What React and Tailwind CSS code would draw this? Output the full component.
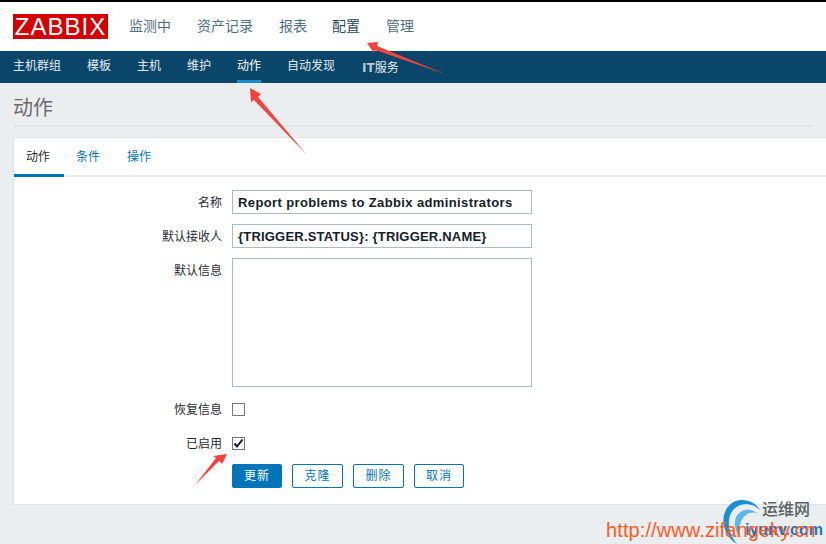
const cjk = "font-['Liberation_Sans','Noto_Sans_CJK_SC',sans-serif]";

const mainMenu = [
  { label: "监测中", w: "w-[68px]" },
  { label: "资产记录", w: "w-[82px]" },
  { label: "报表", w: "w-[53px]" },
  { label: "配置", w: "w-[54px]", active: true },
  { label: "管理", w: "w-[54px]" },
];

const subMenu = [
  { label: "主机群组", w: "w-[74px]" },
  { label: "模板", w: "w-[50px]" },
  { label: "主机", w: "w-[50px]" },
  { label: "维护", w: "w-[50px]" },
  { label: "动作", w: "w-[50px]", active: true },
  { label: "自动发现", w: "w-[74px]" },
];

function Arrow({ points }) {
  return <polygon points={points} fill="#f5423c" />;
}

function Row({ label, children, className = "" }) {
  return (
    <div className={"flex " + className}>
      <div className="h-[24px] w-[218px] pr-[10px] pt-[1px] text-right text-[12px] leading-[24px] text-[#1f2c33]">{label}</div>
      {children}
    </div>
  );
}

function TextInput({ value, tracking }) {
  return (
    <div className={tracking + " w-[300px] h-[24px] border border-[#acbbc4] bg-white pl-[5px] font-['Liberation_Sans',sans-serif] text-[13px] font-bold leading-[23px] text-[#14202a]"}>
      {value}
    </div>
  );
}

function OutlineButton({ label, w }) {
  return (
    <button className={w + " h-[24px] rounded-[2px] border border-[#0275b8] bg-white text-[12px] tracking-[1px] text-[#0275b8]"}>
      {label}
    </button>
  );
}

export default function App() {
  return (
    <div className={"relative w-[826px] h-[544px] overflow-hidden bg-[#ebeef0] " + cjk}>
      <div className="h-[2px] bg-black" />

      <header className="flex h-[49px] items-start bg-white pl-[13px]">
        <div className="mt-[12px] flex h-[25px] w-[95px] items-center justify-center bg-[#d40000] font-['Liberation_Sans',sans-serif] text-[24px] leading-none tracking-[1px] text-white">
          ZABBIX
        </div>
        <nav className="ml-[21px] mt-[12px] flex text-[14px] leading-[24px] text-[#4f6f80]">
          {mainMenu.map((m) => (
            <span key={m.label} className={m.w + (m.active ? " text-[#2b4a5b]" : "")}>{m.label}</span>
          ))}
        </nav>
      </header>

      <nav className="flex h-[32px] items-start bg-[#0a466a] pl-[13px] text-[12px] leading-[30px] text-[#e3edf3]">
        {subMenu.map((m) => (
          <span key={m.label} className={m.w + (m.active ? " text-white" : "")}>
            <span className={"inline-block h-[32px]" + (m.active ? " border-b-[3px] border-[#168ccc]" : "")}>{m.label}</span>
          </span>
        ))}
        <span className="mt-[2px] ml-[1px]"><b className="font-['DejaVu_Sans',sans-serif] text-[#b9c9d2]">IT</b>服务</span>
      </nav>

      <main className="px-[13px]">
        <div className="h-[44px] border-b-2 border-[#e0e4e7] pt-[10px] text-[20px] leading-[30px] text-[#6b6b6b]">动作</div>

        <section className="mt-[10px] h-[368px] w-[830px] border border-[#dfe4e7] bg-white">
          <div className="flex h-[39px] border-b-2 border-[#ebeef0] text-[12px] leading-[39px] text-[#0275b8]">
            <span className="h-[39px] w-[50px] border-b-[3px] border-[#0275b8] pl-[12px] text-[#1f2c33]">动作</span>
            <span className="w-[50px] pl-[12px]">条件</span>
            <span className="w-[50px] pl-[13px]">操作</span>
          </div>

          <div className="pt-[13px]">
            <Row label="名称"><TextInput tracking="tracking-[0.38px]" value="Report problems to Zabbix administrators" /></Row>
            <Row label="默认接收人" className="mt-[10px]"><TextInput tracking="tracking-[0.2px]" value="{TRIGGER.STATUS}: {TRIGGER.NAME}" /></Row>
            <Row label="默认信息" className="mt-[10px]">
              <div className="h-[129px] w-[300px] border border-[#acbbc4] bg-white" />
            </Row>
            <Row label="恢复信息" className="mt-[10px]">
              <div className="mt-[6px] h-[13px] w-[13px] border border-[#767676] bg-white" />
            </Row>
            <Row label="已启用" className="mt-[10px]">
              <div className="mt-[6px] flex h-[13px] w-[13px] items-center justify-center border border-[#767676] bg-white">
                <svg width="11" height="11" viewBox="0 0 11 11">
                  <path d="M1.5 5.5 L4 8.5 L9.5 1.5" fill="none" stroke="#111827" strokeWidth="2" />
                </svg>
              </div>
            </Row>
            <div className="mt-[9px] flex gap-[10px] pl-[218px]">
              <button className="h-[24px] w-[50px] rounded-[2px] bg-[#0275b8] text-[12px] tracking-[1px] text-white">更新</button>
              <OutlineButton label="克隆" w="w-[51px]" />
              <OutlineButton label="删除" w="w-[51px]" />
              <OutlineButton label="取消" w="w-[50px]" />
            </div>
          </div>
        </section>
      </main>

      {/* annotation arrows pasted on the screenshot */}
      <svg className="absolute left-0 top-0" width="826" height="544" viewBox="0 0 826 544">
        <Arrow points="367,43 378,42 377,46 445,74 375,50 374,53" />
        <Arrow points="250,88 261,94 258,97 307,155 254,100 251,102" />
        <Arrow points="227,454 222,464 219,461 195,485 216,458 213,456" />
      </svg>

      {/* site watermark */}
      <svg className="absolute left-[720px] top-[495px]" width="50" height="49" viewBox="0 0 50 49">
        <path d="M40 15 C33 3 15 1 7 13 C0 24 3 40 17 49 C8 38 6 24 13 15 C20 7 32 7 40 15 Z" fill="#1a8fd6" />
        <path d="M38 19 C31 12 20 14 16 22 C13 30 16 38 21 43 C18 33 20 24 26 20 C30 17 34 17 38 19 Z" fill="#5cb8ea" />
      </svg>
      <div className="absolute left-[762px] top-[501px] text-[16px] font-medium leading-[18px] text-[#5a5f63]">运维网</div>
      <div className="absolute left-[745px] top-[521px] font-['Liberation_Sans',sans-serif] text-[16px] font-bold leading-[18px] text-[#1279c9]">iyunv.com</div>
      <div className="absolute left-[606px] top-[517px] font-['Liberation_Sans',sans-serif] text-[20px] leading-[26px] tracking-[0.1px] text-[#ff5a1e]">
        http://www.zifangeky.cn
      </div>
    </div>
  );
}
